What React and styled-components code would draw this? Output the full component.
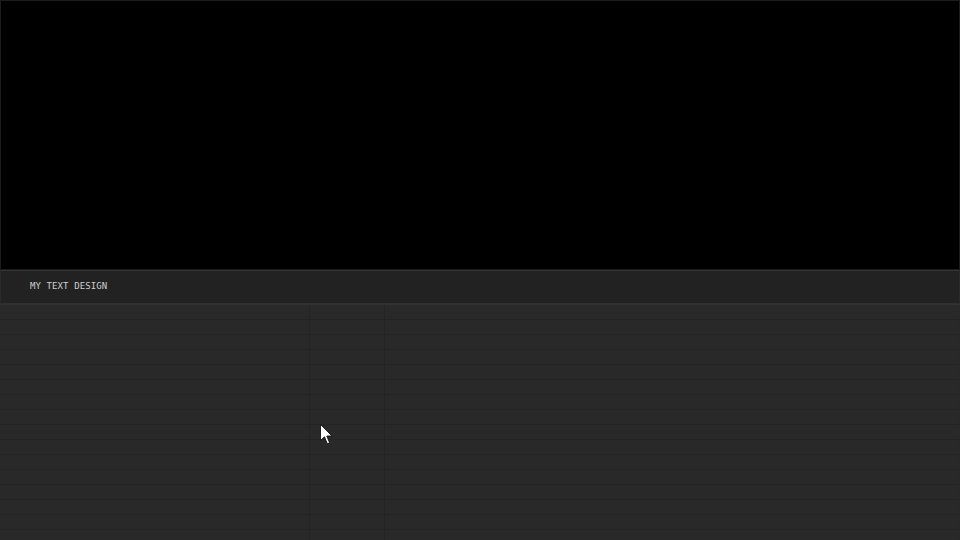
import React from 'react'
import styled, { createGlobalStyle } from 'styled-components'

// Styles
const GlobalStyle = createGlobalStyle`
  html, body {
    margin: 0;
    padding: 0;
    background: #000;
    overflow: hidden;
  }
`

const Wrapper = styled.div`
  position: relative;
  width: 960px;
  height: 540px;
  display: flex;
  flex-direction: column;
  background: #282828;
`

const Preview = styled.div`
  height: 268px;
  flex: none;
  background: #000;
  border: 1px solid #1c1c1c;
`

const TitleBar = styled.div`
  height: 32px;
  flex: none;
  display: flex;
  align-items: center;
  padding-left: 29px;
  padding-bottom: 2px;
  box-sizing: border-box;
  height: 34px;
  background: #222;
  border: 1px solid #2a2a2a;
  border-top-color: #333;
  border-bottom-color: #303030;
  font-family: "DejaVu Sans Mono", "Liberation Mono", monospace;
  font-size: 9px;
  letter-spacing: 0.1px;
  color: #cfcfcf;
`

const Grid = styled.div`
  flex: 1;
  display: grid;
  grid-template-columns: 310px 75px 1fr;
  border-top: 1px solid #333;
  overflow: hidden;
`

const Column = styled.div`
  display: flex;
  flex-direction: column;
  border-right: 1px solid ${props => props.last ? 'transparent' : '#242424'};
`

const Row = styled.div`
  height: 14px;
  flex: none;
  border-bottom: 1px solid #242424;
  background: #292929;
`

const Cursor = styled.svg`
  position: absolute;
  left: 319px;
  top: 423px;
  width: 15px;
  height: 23px;
`

const rows = Array.from({ length: 16 })

// Component
const App = () => (
  <>
    <GlobalStyle />
    <Wrapper>
      <Preview />
      <TitleBar>MY TEXT DESIGN</TitleBar>
      <Grid>
        {[0, 1, 2].map(c => (
          <Column key={c} last={c === 2}>
            {rows.map((_, i) => <Row key={i} />)}
          </Column>
        ))}
      </Grid>
      <Cursor viewBox="0 0 15 23">
        <path
          d="M1.5 1.5 L1.5 17.5 L5.5 13.8 L8.3 20.8 L10.6 19.8 L7.8 13 L13 13 Z"
          fill="#fff"
          stroke="#111"
          strokeWidth="0.9"
          strokeLinejoin="miter"
        />
      </Cursor>
    </Wrapper>
  </>
)

export default App
